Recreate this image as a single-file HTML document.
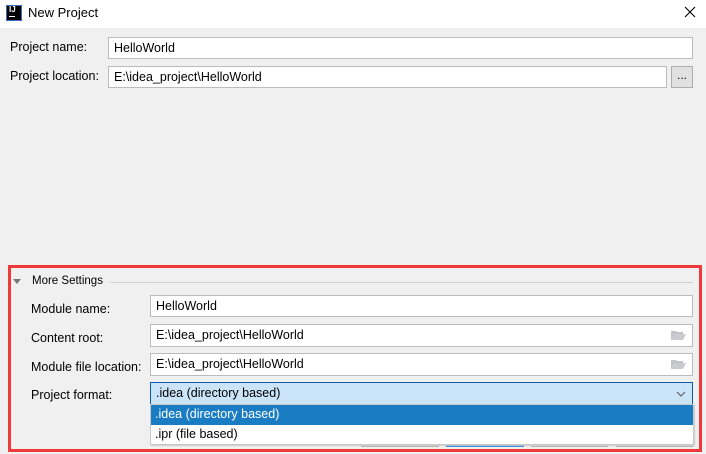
<!DOCTYPE html>
<html><head><style>
*{box-sizing:border-box;margin:0;padding:0}
body{width:706px;height:454px;background:#f0f0f0;font-family:"Liberation Sans","Noto Sans CJK SC",sans-serif;font-size:12.5px;color:#000;position:relative;overflow:hidden}
.a{position:absolute}
.in{position:absolute;background:#fff;border:1px solid #bcbcbc;padding-left:5px;line-height:20px;font-size:12.5px}
.lb{position:absolute;font-size:12.5px}
.fold{position:absolute;right:6px;top:5px;width:15px;height:10px}
</style></head><body>
<div class="a" style="left:0;top:0;width:706px;height:28px;background:#fff"></div>
<div class="a" style="left:6px;top:5px;width:16px;height:16px;background:#000;border:1px solid #3a6ec0"></div>
<div class="a" style="left:9px;top:5px;color:#fff;font-size:8px;font-weight:bold">IJ</div>
<div class="a" style="left:9px;top:16px;width:6px;height:1px;background:#fff"></div>
<div class="a" style="left:28px;top:5px;font-size:13px">New Project</div>
<svg class="a" style="left:684px;top:6px" width="12" height="12"><path d="M1 1L11 11M11 1L1 11" stroke="#000" stroke-width="1.1"/></svg>

<div class="lb" style="left:10px;top:40px">Project name:</div>
<div class="in" style="left:108px;top:37px;width:585px;height:22px">HelloWorld</div>
<div class="lb" style="left:10px;top:69px">Project location:</div>
<div class="in" style="left:108px;top:66px;width:559px;height:22px">E:\idea_project\HelloWorld</div>
<div class="a" style="left:671px;top:66px;width:22px;height:22px;background:#e1e1e1;border:1px solid #adadad;text-align:center;line-height:16px;font-size:12px">...</div>

<div class="a" style="left:8px;top:265px;width:694px;height:187px;border:3px solid #f03a3a"></div>
<svg class="a" style="left:13px;top:279px" width="10" height="7"><path d="M0 0L8 0L4 5Z" fill="#777"/></svg>
<div class="lb" style="left:32px;top:275px;font-size:11.5px">More Settings</div>
<div class="a" style="left:110px;top:282px;width:583px;height:1px;background:#d0d0d0"></div>

<div class="lb" style="left:31px;top:302px">Module name:</div>
<div class="in" style="left:150px;top:295px;width:543px;height:22px">HelloWorld</div>
<div class="lb" style="left:31px;top:331px">Content root:</div>
<div class="in" style="left:150px;top:324px;width:543px;height:23px">E:\idea_project\HelloWorld
<svg class="fold" viewBox="0 0 15 10"><path d="M0 1h5l1 1h6v2H3L0 10Z" fill="#c0c4c8"/><path d="M3 4h12l-3 6H0Z" fill="#c8ccd0"/></svg></div>
<div class="lb" style="left:31px;top:360px">Module file location:</div>
<div class="in" style="left:150px;top:353px;width:543px;height:23px">E:\idea_project\HelloWorld
<svg class="fold" viewBox="0 0 15 10"><path d="M0 1h5l1 1h6v2H3L0 10Z" fill="#c0c4c8"/><path d="M3 4h12l-3 6H0Z" fill="#c8ccd0"/></svg></div>
<div class="lb" style="left:31px;top:388px">Project format:</div>
<div class="in" style="left:150px;top:382px;width:543px;height:23px;background:#cce4f7;border-color:#0b5bb0">.idea (directory based)
<svg class="a" style="right:6px;top:8px" width="10" height="6"><path d="M1 1L5 5L9 1" stroke="#555" fill="none"/></svg></div>

<div class="a" style="left:361px;top:440px;width:78px;height:7px;background:#e1e1e1;border:1px solid #adadad"></div>
<div class="a" style="left:446px;top:440px;width:78px;height:7px;background:#e5f1fb;border:1px solid #1a7fe0;border-width:0 0 2px"></div>
<div class="a" style="left:531px;top:440px;width:77px;height:7px;background:#e1e1e1;border:1px solid #adadad"></div>
<div class="a" style="left:616px;top:440px;width:77px;height:7px;background:#e1e1e1;border:1px solid #adadad"></div>

<div class="a" style="left:150px;top:404px;width:544px;height:41px;background:#fff;border:1px solid #c8c8c8;box-shadow:1px 1px 1px #ccc">
<div style="height:20px;background:#1a7dc4;color:#fff;padding-left:4px;line-height:19px">.idea (directory based)</div>
<div style="height:19px;padding-left:4px;line-height:19px">.ipr (file based)</div>
</div>
</body></html>
